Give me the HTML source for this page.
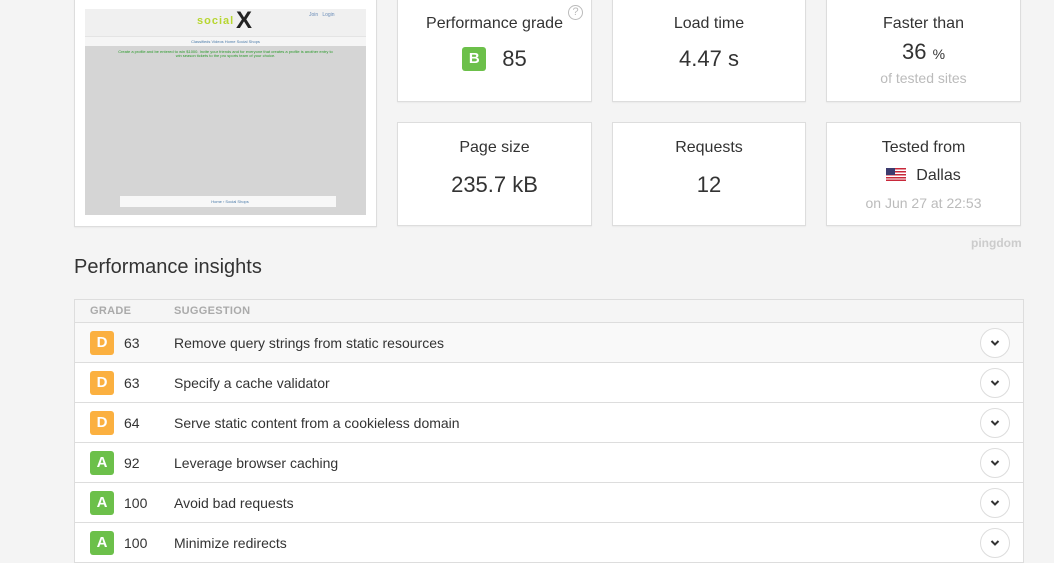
<!DOCTYPE html>
<html><head><style>
body{margin:0;width:1054px;height:539px;overflow:hidden;background:#f4f4f4;font-family:"Liberation Sans",Arial,sans-serif;color:#333;position:relative}
.card{position:absolute;background:#fff;border:1px solid #ddd;box-sizing:border-box;text-align:center;box-shadow:0 1px 1px rgba(0,0,0,.04)}
.t{font-size:16px;color:#333;position:absolute;left:0;right:0}
.v{font-size:22px;color:#333;position:absolute;left:0;right:0}
.s{font-size:14px;color:#bbb;position:absolute;left:0;right:0}
.g{display:inline-block;width:24px;height:24px;border-radius:3px;color:#fff;font-weight:bold;font-size:15px;line-height:24px;text-align:center;vertical-align:middle}
.gD{background:#fbb040}.gA,.gB{background:#6cc04a}
table{position:absolute;left:74px;top:299px;width:950px;border-collapse:collapse;background:#fff;border:1px solid #ddd;font-size:14px}
th{height:22px;padding:0;background:#f5f5f5;color:#aaa;font-size:11px;text-align:left;font-weight:bold;border-bottom:1px solid #ddd;letter-spacing:.3px}
td{height:39px;border-bottom:1px solid #ddd;padding:0}
.n{margin-left:10px;vertical-align:middle}
.btn{width:30px;height:30px;border:1px solid #ddd;border-radius:50%;background:#fff;display:inline-block;box-sizing:border-box;position:relative;vertical-align:middle}
.btn svg{position:absolute;left:9px;top:10px}
</style></head><body>
<div class="card" style="left:74px;top:-10px;width:303px;height:237px">
 <div style="position:absolute;left:10px;top:18px;width:281px;height:206px;background:#d5d5d5">
  <div style="height:27px;background:#f0f0f0;position:relative">
   <span style="position:absolute;left:112px;top:6px;font-weight:bold;font-size:11px;color:#b7d630;letter-spacing:1px">social</span>
   <span style="position:absolute;left:151px;top:-2px;font-size:24px;font-weight:bold;color:#222">X</span>
   <span style="position:absolute;left:224px;top:3px;font-size:5px;color:#6a8cb8">Join &nbsp; Login</span>
  </div>
  <div style="height:9px;background:#f5f5f5;border-top:1px solid #e4e4e4;font-size:4px;color:#4a7aa8;text-align:center;line-height:9px">Classifieds Videos Home Social Shops</div>
  <div style="font-size:4px;color:#2a9a2a;text-align:center;padding:4px 30px;line-height:4px">Create a profile and be entered to win $1000. Invite your friends and for everyone that creates a profile is another entry to win season tickets to the pro sports team of your choice.</div>
  <div style="position:absolute;left:35px;top:187px;width:216px;height:11px;background:#f7f7f7;font-size:4px;color:#4a7aa8;line-height:11px;text-indent:4px">Home › Social Shops</div>
 </div>
</div>
<div class="card" style="left:397px;top:-10px;width:195px;height:112px">
 <div class="t" style="top:24px">Performance grade</div>
 <div style="position:absolute;left:170px;top:14px;width:15px;height:15px;border:1px solid #bbb;border-radius:50%;font-size:11px;color:#bbb;box-sizing:border-box;line-height:13px">?</div>
 <div style="position:absolute;left:0;right:0;top:55px"><span class="g gB">B</span><span style="font-size:22px;margin-left:16px;vertical-align:middle">85</span></div>
</div>
<div class="card" style="left:612px;top:-10px;width:194px;height:112px">
 <div class="t" style="top:24px">Load time</div><div class="v" style="top:55px">4.47 s</div>
</div>
<div class="card" style="left:826px;top:-10px;width:195px;height:112px">
 <div class="t" style="top:24px">Faster than</div><div class="v" style="top:48px">36 <span style="font-size:14px">%</span></div>
 <div class="s" style="top:79px">of tested sites</div>
</div>
<div class="card" style="left:397px;top:122px;width:195px;height:104px">
 <div class="t" style="top:16px">Page size</div><div class="v" style="top:49px">235.7 kB</div>
</div>
<div class="card" style="left:612px;top:122px;width:194px;height:104px">
 <div class="t" style="top:16px">Requests</div><div class="v" style="top:49px">12</div>
</div>
<div class="card" style="left:826px;top:122px;width:195px;height:104px">
 <div class="t" style="top:16px">Tested from</div>
 <div class="t" style="top:44px"><svg width="20" height="13" viewBox="0 0 20 13" style="vertical-align:-1px;margin-right:10px"><rect width="20" height="13" fill="#fff"/><g fill="#c8283a"><rect y="0" width="20" height="1.5"/><rect y="3" width="20" height="1.5"/><rect y="6" width="20" height="1.5"/><rect y="9" width="20" height="1.5"/><rect y="11.5" width="20" height="1.5"/></g><rect width="9" height="7" fill="#3c3b6e"/></svg>Dallas</div>
 <div class="s" style="top:72px">on Jun 27 at 22:53</div>
</div>
<div style="position:absolute;left:971px;top:236px;font-size:12px;color:#ccc;font-weight:bold">pingdom</div>
<div style="position:absolute;left:74px;top:256px;font-size:20px;color:#333">Performance insights</div>
<table>
<tr><th style="width:84px;padding-left:15px">GRADE</th><th>SUGGESTION</th><th style="width:43px"></th></tr>
<tr style="background:#f9f9f9"><td style="padding-left:15px"><span class="g gD">D</span><span class="n">63</span></td><td>Remove query strings from static resources</td><td><span class="btn"><svg width="10" height="8" viewBox="0 0 10 8"><path d="M1.5 2L5 5.5 8.5 2" stroke="#333" stroke-width="2" fill="none"/></svg></span></td></tr>
<tr><td style="padding-left:15px"><span class="g gD">D</span><span class="n">63</span></td><td>Specify a cache validator</td><td><span class="btn"><svg width="10" height="8" viewBox="0 0 10 8"><path d="M1.5 2L5 5.5 8.5 2" stroke="#333" stroke-width="2" fill="none"/></svg></span></td></tr>
<tr><td style="padding-left:15px"><span class="g gD">D</span><span class="n">64</span></td><td>Serve static content from a cookieless domain</td><td><span class="btn"><svg width="10" height="8" viewBox="0 0 10 8"><path d="M1.5 2L5 5.5 8.5 2" stroke="#333" stroke-width="2" fill="none"/></svg></span></td></tr>
<tr><td style="padding-left:15px"><span class="g gA">A</span><span class="n">92</span></td><td>Leverage browser caching</td><td><span class="btn"><svg width="10" height="8" viewBox="0 0 10 8"><path d="M1.5 2L5 5.5 8.5 2" stroke="#333" stroke-width="2" fill="none"/></svg></span></td></tr>
<tr><td style="padding-left:15px"><span class="g gA">A</span><span class="n">100</span></td><td>Avoid bad requests</td><td><span class="btn"><svg width="10" height="8" viewBox="0 0 10 8"><path d="M1.5 2L5 5.5 8.5 2" stroke="#333" stroke-width="2" fill="none"/></svg></span></td></tr>
<tr><td style="padding-left:15px"><span class="g gA">A</span><span class="n">100</span></td><td>Minimize redirects</td><td><span class="btn"><svg width="10" height="8" viewBox="0 0 10 8"><path d="M1.5 2L5 5.5 8.5 2" stroke="#333" stroke-width="2" fill="none"/></svg></span></td></tr>
</table>
</body></html>
